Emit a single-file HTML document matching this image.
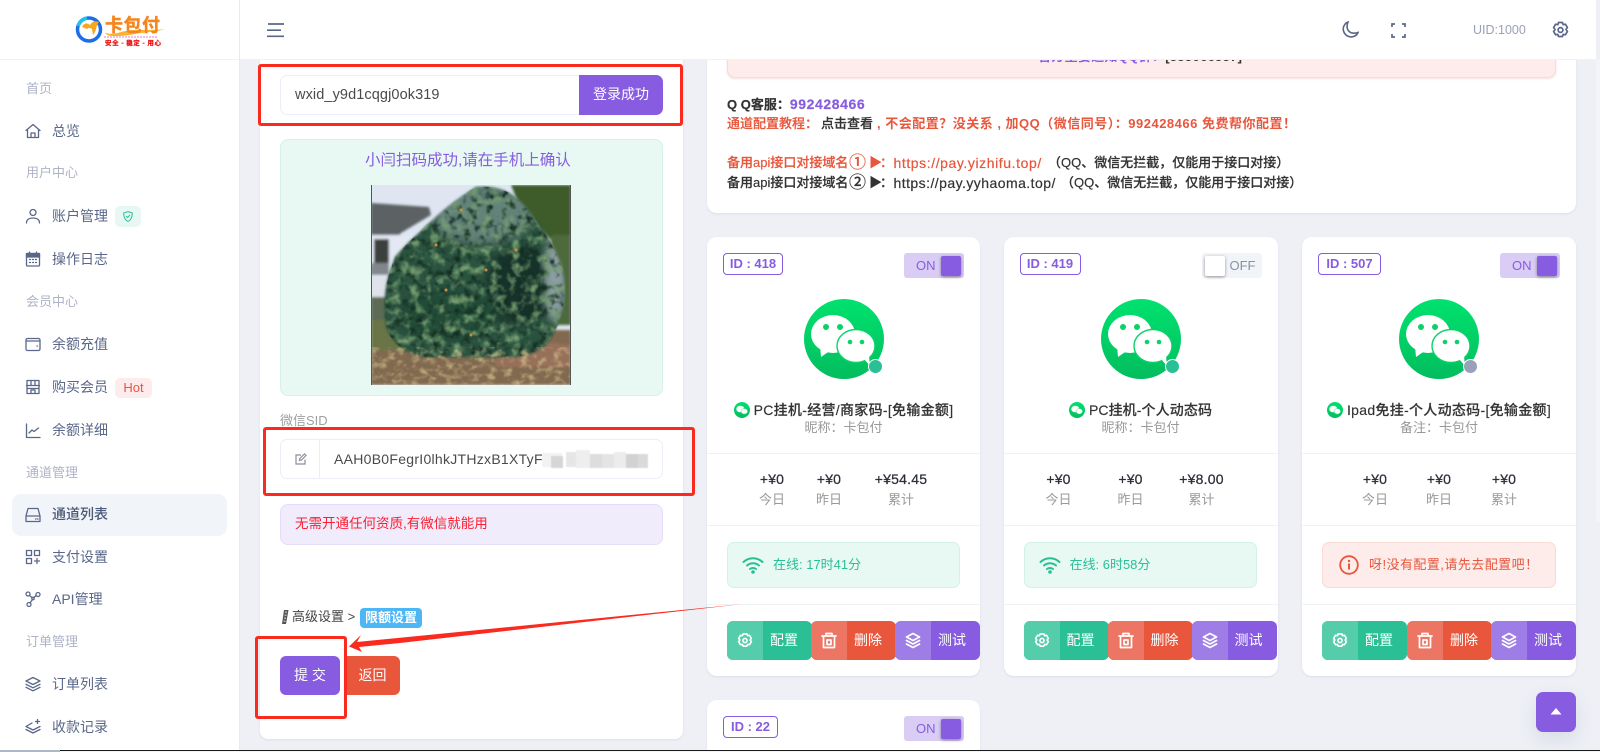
<!DOCTYPE html>
<html lang="zh"><head><meta charset="utf-8"><title>卡包付</title>
<style>
*{box-sizing:border-box;margin:0;padding:0}
html,body{width:1600px;height:752px;overflow:hidden;background:#eef0f6}
body{position:relative;font-family:"Liberation Sans","Noto Sans CJK SC",sans-serif;font-size:13px;color:#333}
.a,.t,.card,.card>*{position:absolute}
.t{white-space:nowrap;line-height:20px}
.side{left:0;top:0;width:240px;height:752px;background:#fff;border-right:1px solid #e8eaf0;z-index:5}
.head{left:240px;top:0;width:1356px;height:60px;background:#fff;border-bottom:1px solid #f1f2f6;z-index:4}
.sec{left:26px;color:#aeb3c6;font-size:13px}
.it{left:52px;color:#5a6788;font-size:14px}
.ic{position:absolute;left:25px;width:16px;height:16px;fill:none;stroke:#5a6788;stroke-width:1.3;stroke-linecap:round;stroke-linejoin:round}
.box{background:#fff;border-radius:8px;box-shadow:0 1px 2px rgba(60,70,110,.1)}
.rb{position:absolute;border:3px solid #fb2a1e;border-radius:3px;z-index:3}
.card{width:273px;height:439px;background:#fff;border-radius:10px;box-shadow:0 1px 2px rgba(60,70,110,.1)}
.id{left:16px;top:16px;height:22px;border:1px solid #875ce0;border-radius:4px;color:#875ce0;font-weight:bold;font-size:13px;line-height:20px;text-align:center;white-space:nowrap}
.tg{left:197px;top:16px;width:60px;height:25px;background:#d9cdf5;border-radius:3px;color:#875ce0;font-size:13px;line-height:25px}
.tg i{position:absolute;left:37px;top:3px;width:20px;height:20px;background:#875ce0;border-radius:2px;box-shadow:0 1px 3px rgba(0,0,0,.4)}
.tg span{position:absolute;left:12px}
.tg.off{background:#f1f4f8;color:#8a8fa3}
.tg.off i{left:3px;background:#fff}
.tg.off span{left:28px}
.we{left:97px;top:62px;width:80px;height:80px}
.dot{left:161px;top:122px;width:15px;height:15px;border-radius:50%;background:#2abf94;border:1.5px solid #fff}
.ti{left:0;width:273px;top:163px;text-align:center;font-size:14px;line-height:20px;font-weight:500;color:#333;white-space:nowrap;letter-spacing:.3px;-webkit-text-stroke:.15px #333}
.ti svg{width:16px;height:16px;vertical-align:-3px;margin-right:4px}
.su{left:0;width:273px;top:181px;text-align:center;color:#999;font-size:13px;line-height:20px}
.hr{left:0;width:273px;height:1px;background:#f1f2f6}
.v,.l{width:80px;text-align:center;line-height:20px}
.v{top:232px;font-size:14px;color:#2b2f3a;-webkit-text-stroke:.25px #2b2f3a;letter-spacing:.2px}
.l{top:253px;color:#999;font-size:13px}
.st{left:20px;top:305px;width:233px;height:46px;background:#e8f8f3;border:1px solid #d3f1e8;border-radius:7px;color:#2abf94;line-height:44px;font-size:13px;padding-left:45px;white-space:nowrap}
.st svg{position:absolute;left:14px;top:13px;width:22px;height:18px}
.st.e{background:#fdecea;border-color:#fbd9d5;color:#e8563c;padding-left:46px;letter-spacing:.45px}
.st.e svg{left:16px;top:12px;width:20px;height:20px}
.b{top:384px;width:85px;height:39px;border-radius:6px;overflow:hidden;color:#fff;font-size:14px;line-height:39px;text-align:right;padding-right:14px}
.b i{position:absolute;left:0;top:0;width:36px;height:39px}
.b svg{position:absolute;left:10px;top:11px;width:16px;height:17px;fill:none;stroke:#fff;stroke-width:1.7;stroke-linejoin:round;stroke-linecap:round}
.g{background:#2abf94}.g i{background:#55cdaa}
.r{background:#e8563c}.r i{background:#ec7663}
.p{background:#875ce0}.p i{background:#9f7de6}
.red{color:#e8563c}
.pu{color:#875ce0}
.bd{font-weight:bold}
.m{font-weight:500;-webkit-text-stroke:.2px currentColor}
.url{font-size:14px}
</style></head><body>
<svg width="0" height="0" style="position:absolute"><defs>
<linearGradient id="wg" x1="0" y1="0" x2="0" y2="1"><stop offset="0" stop-color="#00e26f"/><stop offset="1" stop-color="#03bd5e"/></linearGradient>
<symbol id="we" viewBox="0 0 80 80"><circle cx="40" cy="40" r="40" fill="url(#wg)"/>
<ellipse cx="29" cy="35" rx="22" ry="19" fill="#fff"/><path d="M16 47l1 11 10-7z" fill="#fff"/>
<circle cx="22" cy="28" r="3" fill="#0ad269"/><circle cx="36" cy="28" r="3" fill="#0ad269"/>
<ellipse cx="52" cy="47" rx="19" ry="16.5" fill="#fff" stroke="#0ad269" stroke-width="1.4"/><path d="M60 60l6 7-1-10z" fill="#fff"/>
<circle cx="46" cy="43" r="2.3" fill="#0ad269"/><circle cx="58" cy="43" r="2.3" fill="#0ad269"/></symbol>
<symbol id="wes" viewBox="0 0 16 16"><circle cx="8" cy="8" r="8" fill="url(#wg)"/><ellipse cx="6.3" cy="7" rx="4" ry="3.3" fill="#fff"/><ellipse cx="10.3" cy="9.3" rx="3.3" ry="2.8" fill="#fff" stroke="#0ad269" stroke-width=".4"/></symbol>
<symbol id="gear" viewBox="0 0 17 18"><path d="M6.500 2h4l.7 1.900 2.100-.4 2 3.400-1.400 1.600 1.400 1.600-2 3.400-2.100-.4-.7 1.900h-4l-.7-1.900-2.100.4-2-3.400 1.400-1.600-1.400-1.600 2-3.400 2.100.4z"/><circle cx="8.500" cy="9" r="2.200"/></symbol>
<symbol id="trash" viewBox="0 0 16 17"><path d="M1 4h14M5 4V1.500h6V4M2.500 4v11.500h11V4M6 8h4v4.500H6z"/></symbol>
<symbol id="lay" viewBox="0 0 16 17"><path d="M8 1.500l6.500 3.500L8 8.500 1.500 5zM1.500 8.500L8 12l6.500-3.500M1.500 12L8 15.500l6.500-3.500"/></symbol>
<symbol id="wifi" viewBox="0 0 22 18"><g fill="none" stroke="#2abf94" stroke-width="2" stroke-linecap="round"><path d="M1.500 6C7 1 15 1 20.500 6"/><path d="M5 9.500c3.500-3 8.500-3 12 0"/><path d="M8 13c1.800-1.300 4.200-1.300 6 0"/></g><circle cx="11" cy="16" r="1.800" fill="#2abf94"/></symbol>
<filter id="leaf" x="0" y="0" width="100%" height="100%" color-interpolation-filters="sRGB"><feTurbulence type="fractalNoise" baseFrequency=".1" numOctaves="3" seed="5"/><feColorMatrix values="0 0 0 0 .46 0 0 0 0 .62 0 0 0 0 .44 3 0 0 0 -1.400"/><feGaussianBlur stdDeviation=".6"/></filter>
<filter id="leaf2" x="0" y="0" width="100%" height="100%" color-interpolation-filters="sRGB"><feTurbulence type="fractalNoise" baseFrequency=".13" numOctaves="2" seed="21"/><feColorMatrix values="0 0 0 0 .08 0 0 0 0 .18 0 0 0 0 .13 3.500 0 0 0 -1.700"/><feGaussianBlur stdDeviation=".6"/></filter>
<filter id="dirt" x="0" y="0" width="100%" height="100%" color-interpolation-filters="sRGB"><feTurbulence type="fractalNoise" baseFrequency=".12 .18" numOctaves="3" seed="9"/><feColorMatrix values="0 0 0 0 .84 0 0 0 0 .76 0 0 0 0 .56 3 0 0 0 -1.400"/><feGaussianBlur stdDeviation=".5"/></filter>
<filter id="bl"><feGaussianBlur stdDeviation="1.200"/></filter>
<filter id="bl2"><feGaussianBlur stdDeviation="4"/></filter>
<clipPath id="tree"><path d="M24 72Q36 58 50 46 75 20 105 2q30-3 48 18 26 30 38 62 8 35-8 65-8 22-40 25H55q-30-4-40-30-4-25 2-50z"/></clipPath>
</defs></svg>

<!-- content -->
<div class="a box" style="left:260px;top:40px;width:423px;height:699px"></div>
<div class="a" style="left:280px;top:75px;width:383px;height:40px;background:#fff;border:1px solid #eceef6;border-radius:7px"></div>
<div class="a" style="left:579px;top:75px;width:84px;height:40px;background:#875ce0;border-radius:0 7px 7px 0;color:#fff;font-size:14px;line-height:39px;text-align:center">登录成功</div>
<div class="t" style="left:295px;top:85px;font-size:14.500px;color:#4a4a4a;letter-spacing:.1px">wxid_y9d1cqgj0ok319</div>
<div class="rb" style="left:258px;top:64px;width:425px;height:62px"></div>

<div class="a" style="left:280px;top:139px;width:383px;height:257px;background:#e8f8f3;border:1px solid #d6f1e9;border-radius:8px"></div>
<div class="t" style="left:365px;top:150.500px;font-size:15.500px;color:#875ce0">小闫扫码成功,请在手机上确认</div>
<svg class="a" style="left:371px;top:185px" width="200" height="200" viewBox="0 0 200 200">
<rect width="200" height="200" fill="#dfe6f2"/>
<g filter="url(#bl)">
<path d="M0 18 L58 22 L60 30 L30 48 L22 60 L0 62z" fill="#5c6264"/>
<rect x="0" y="50" width="60" height="60" fill="#e3e8f3"/>
<rect x="3" y="54" width="15" height="24" fill="#3a3f3c"/>
<rect x="0" y="78" width="18" height="12" fill="#80868a"/>
<rect x="0" y="92" width="16" height="22" fill="#dfe2ea"/>
<rect x="0" y="112" width="40" height="30" fill="#5d6a55"/>
<path d="M140 0H200V80L185 60 150 25z" fill="#3d5c2b"/>
<path d="M180 50h20v90h-20z" fill="#4d6a3c"/>
<rect x="0" y="145" width="200" height="55" fill="#80694f"/>
<path d="M0 135h50v30H0z" fill="#6a7446"/>
<path d="M125 150l75 10v22h-75z" fill="#97705a"/>
</g>
<g filter="url(#bl)"><g clip-path="url(#tree)">
<rect width="200" height="200" fill="#2c5240"/>
<ellipse cx="110" cy="30" rx="52" ry="28" fill="#64827a" filter="url(#bl2)"/>
<ellipse cx="150" cy="100" rx="34" ry="38" fill="#14302a" filter="url(#bl2)"/>
<ellipse cx="184" cy="95" rx="12" ry="42" fill="#8a9ea2" filter="url(#bl2)"/>
<ellipse cx="75" cy="130" rx="48" ry="28" fill="#234c37" filter="url(#bl2)"/>
</g></g>
<g clip-path="url(#tree)">
<rect width="200" height="200" filter="url(#leaf2)"/>
<rect width="200" height="200" filter="url(#leaf)"/>
</g>
<rect y="162" width="200" height="38" filter="url(#dirt)" opacity=".7"/>
<g fill="#d68a35"><circle cx="90" cy="25" r="1.500"/><circle cx="145" cy="65" r="1.500"/><circle cx="115" cy="85" r="1.500"/><circle cx="75" cy="105" r="1.500"/><circle cx="65" cy="60" r="1.500"/><circle cx="100" cy="150" r="1.500"/></g>
<rect x="0" width="1" height="200" fill="#555"/><rect x="199" width="1" height="200" fill="#555"/>
</svg>

<div class="t" style="left:280px;top:411px;color:#a0a0a0">微信SID</div>
<div class="a" style="left:280px;top:439px;width:383px;height:40px;background:#fff;border:1px solid #eceef6;border-radius:7px"></div>
<div class="a" style="left:319px;top:439px;width:1px;height:40px;background:#eceef6"></div>
<svg class="a" style="left:295px;top:453px" width="12" height="12" viewBox="0 0 12 12" fill="none" stroke="#8a8f9e" stroke-width="1.200"><path d="M10 6.500V11H1V2h5"/><path d="M4.500 7.500l.3-2L9.500 1l1.500 1.500L6.500 7z"/></svg>
<div class="t" style="left:334px;top:449px;font-size:14px;color:#4a4a4a;letter-spacing:.28px;width:210px;overflow:hidden">AAH0B0FegrI0lhkJTHzxB1XTyF</div>
<svg class="a" style="left:542px;top:447px" width="112" height="24"><rect width="112" height="24" fill="#fff"/><g fill="#e6e6e6" style="filter:blur(.5px)"><rect x="0" y="6" width="20" height="14" fill="#f2f2f2"/><rect x="9" y="9" width="12" height="12" fill="#d6d6d6"/><rect x="24" y="5" width="10" height="15"/><rect x="34" y="3" width="14" height="18" fill="#eeeeee"/><rect x="48" y="7" width="12" height="14" fill="#dddddd"/><rect x="60" y="7" width="12" height="14" fill="#e4e4e4"/><rect x="72" y="5" width="12" height="16" fill="#ececec"/><rect x="84" y="7" width="12" height="14" fill="#d2d2d2"/><rect x="96" y="7" width="10" height="14" fill="#dadada"/></g></svg>
<div class="rb" style="left:263px;top:427px;width:432px;height:69px"></div>

<div class="a" style="left:280px;top:504px;width:383px;height:41px;background:#f1ecfb;border:1px solid #e5dcf7;border-radius:8px"></div>
<div class="t" style="left:295px;top:514px;font-size:13.500px;color:#fb1f33">无需开通任何资质,有微信就能用</div>

<svg class="a" style="left:281px;top:609px" width="9" height="16" viewBox="0 0 9 16"><path d="M3 1h4.500L5 15H1z" fill="#555"/><path d="M4 3l2 .3M3.500 6l2 .3M3 9l2 .3M2.500 12l2 .3" stroke="#ddd"/></svg>
<div class="t" style="left:292px;top:607px;color:#444;font-size:13px">高级设置 &gt;</div>
<div class="a" style="left:360px;top:608px;width:62px;height:20px;background:#4db6f5;border-radius:4px;color:#fff;text-align:center;line-height:20px;font-size:13px;font-weight:bold">限额设置</div>
<div class="a" style="left:280px;top:656px;width:60px;height:39px;background:#875ce0;border-radius:6px;color:#fff;text-align:center;line-height:39px;font-size:14px">提 交</div>
<div class="a" style="left:345px;top:656px;width:55px;height:39px;background:#e8563c;border-radius:0 6px 6px 0;color:#fff;text-align:center;line-height:39px;font-size:14px">返回</div>
<div class="rb" style="left:255px;top:636px;width:92px;height:83px"></div>

<div class="a box" style="left:707px;top:30px;width:869px;height:183px;border-radius:10px"></div>
<div class="a" style="left:727px;top:30px;width:829px;height:48px;background:#fdecea;border:1px solid #fbd9d5;border-radius:8px;box-shadow:0 1px 2px rgba(200,100,90,.2)"></div>
<div class="t bd" style="left:1038px;top:47px;color:#875ce0;letter-spacing:.3px">官方重要通知QQ群：<span style="color:#333">[555066557]</span></div>
<div class="t m" style="left:727px;top:94px;color:#333;font-weight:bold">Q Q客服：<span class="pu bd" style="font-size:14px;letter-spacing:.6px">992428466</span></div>

<div class="t m red" style="left:727px;top:114px">通道配置教程：</div>
<div class="t m" style="left:821px;top:114px;color:#333">点击查看</div>
<div class="t bd red" style="left:877px;top:114px;letter-spacing:.5px">, 不会配置？没关系 , 加QQ（微信同号）：992428466 免费帮你配置！</div>

<div class="t m red" style="left:727px;top:153px">备用api接口对接域名</div>
<div class="t m red" style="left:849px;top:153px;font-size:17px">①</div>
<div class="t m red" style="left:869px;top:153px">▶</div>
<div class="t m red" style="left:880px;top:153px">：</div>
<div class="t m red url" style="left:893.500px;top:153px;letter-spacing:.58px">https://pay.yizhifu.top/</div>
<div class="t m" style="left:1048px;top:153px;color:#333">（QQ、微信无拦截，仅能用于接口对接）</div>

<div class="t m" style="left:727px;top:173px;color:#333">备用api接口对接域名</div>
<div class="t m" style="left:849px;top:173px;font-size:17px;color:#333">②</div>
<div class="t m" style="left:869px;top:173px;color:#333">▶</div>
<div class="t m" style="left:880px;top:173px;color:#333">：</div>
<div class="t m url" style="left:893.500px;top:173px;letter-spacing:.45px;color:#333">https://pay.yyhaoma.top/</div>
<div class="t m" style="left:1061px;top:173px;color:#333">（QQ、微信无拦截，仅能用于接口对接）</div>

<!-- card 1 -->
<div class="card" style="left:707px;top:237px">
<div class="id" style="width:60px">ID : 418</div>
<div class="tg"><span>ON</span><i></i></div>
<svg class="we"><use href="#we"/></svg><div class="dot"></div>
<div class="ti"><svg><use href="#wes"/></svg>PC挂机-经营/商家码-[免输金额]</div>
<div class="su">昵称：卡包付</div>
<div class="hr" style="top:216px"></div>
<div class="v" style="left:25px">+¥0</div><div class="l" style="left:25px">今日</div>
<div class="v" style="left:82px">+¥0</div><div class="l" style="left:82px">昨日</div>
<div class="v" style="left:154px">+¥54.45</div><div class="l" style="left:154px">累计</div>
<div class="hr" style="top:288px"></div>
<div class="st"><svg><use href="#wifi"/></svg>在线: 17时41分</div>
<div class="hr" style="top:367px"></div>
<div class="b g" style="left:20px"><i><svg><use href="#gear"/></svg></i>配置</div>
<div class="b r" style="left:104px"><i><svg><use href="#trash"/></svg></i>删除</div>
<div class="b p" style="left:188px"><i><svg><use href="#lay"/></svg></i>测试</div>
</div>
<!-- card 2 -->
<div class="card" style="left:1003.500px;top:237px;width:274px">
<div class="id" style="width:61px">ID : 419</div>
<div class="tg off" style="left:198px"><i></i><span>OFF</span></div>
<svg class="we"><use href="#we"/></svg><div class="dot"></div>
<div class="ti" style="letter-spacing:.1px;width:274px"><svg><use href="#wes"/></svg>PC挂机-个人动态码</div>
<div class="su" style="width:274px">昵称：卡包付</div>
<div class="hr" style="top:216px;width:274px"></div>
<div class="v" style="left:15px">+¥0</div><div class="l" style="left:15px">今日</div>
<div class="v" style="left:87px">+¥0</div><div class="l" style="left:87px">昨日</div>
<div class="v" style="left:158px">+¥8.00</div><div class="l" style="left:158px">累计</div>
<div class="hr" style="top:288px;width:274px"></div>
<div class="st"><svg><use href="#wifi"/></svg>在线: 6时58分</div>
<div class="hr" style="top:367px;width:274px"></div>
<div class="b g" style="left:20px"><i><svg><use href="#gear"/></svg></i>配置</div>
<div class="b r" style="left:104px"><i><svg><use href="#trash"/></svg></i>删除</div>
<div class="b p" style="left:188px"><i><svg><use href="#lay"/></svg></i>测试</div>
</div>
<!-- card 3 -->
<div class="card" style="left:1302px;top:237px;width:274px">
<div class="id" style="width:63px">ID : 507</div>
<div class="tg" style="left:198px"><span>ON</span><i></i></div>
<svg class="we"><use href="#we"/></svg><div class="dot" style="background:#9aa0b8"></div>
<div class="ti" style="width:274px"><svg><use href="#wes"/></svg>Ipad免挂-个人动态码-[免输金额]</div>
<div class="su" style="width:274px">备注：卡包付</div>
<div class="hr" style="top:216px;width:274px"></div>
<div class="v" style="left:33px">+¥0</div><div class="l" style="left:33px">今日</div>
<div class="v" style="left:97px">+¥0</div><div class="l" style="left:97px">昨日</div>
<div class="v" style="left:162px">+¥0</div><div class="l" style="left:162px">累计</div>
<div class="hr" style="top:288px;width:274px"></div>
<div class="st e" style="width:234px"><svg viewBox="0 0 20 20"><circle cx="10" cy="10" r="8.800" fill="none" stroke="#e8563c" stroke-width="1.800"/><rect x="9" y="8.500" width="2" height="6" fill="#e8563c"/><circle cx="10" cy="6" r="1.200" fill="#e8563c"/></svg>呀!没有配置,请先去配置吧！</div>
<div class="hr" style="top:367px;width:274px"></div>
<div class="b g" style="left:20px"><i><svg><use href="#gear"/></svg></i>配置</div>
<div class="b r" style="left:105px"><i><svg><use href="#trash"/></svg></i>删除</div>
<div class="b p" style="left:189px"><i><svg><use href="#lay"/></svg></i>测试</div>
</div>
<!-- card 4 -->
<div class="card" style="left:707px;top:700px;height:52px;border-radius:10px 10px 0 0">
<div class="id" style="width:55px">ID : 22</div>
<div class="tg"><span>ON</span><i></i></div>
</div>

<svg class="a" style="left:340px;top:600px;z-index:3" width="410" height="60"><polygon points="403,4 17,42 21,35 9,46.500 22,52 19,47 60,43" fill="#fb2a1e"/></svg>

<div class="a" style="left:1536px;top:692px;width:40px;height:40px;background:#875ce0;border-radius:7px;box-shadow:0 8px 20px rgba(60,70,110,.12)"><svg class="a" style="left:14px;top:16px" width="12" height="7"><path d="M6 0l5.500 6.500H.5z" fill="#fff"/></svg></div>
<div class="a" style="left:1596px;top:60px;width:4px;height:462px;background:#f3f4f8"></div>

<!-- header -->
<div class="a head">
<svg class="a" style="left:27px;top:22px" width="18" height="16"><path d="M1 2h16M0 8.200h14M0 14.300h17" stroke="#5a6788" stroke-width="1.700" fill="none"/></svg>
<svg class="a" style="left:1102px;top:21px" width="17" height="17" viewBox="0 0 17 17" fill="none" stroke="#5a6788" stroke-width="1.600"><path d="M6 1C3 9 8 14 16 11.500 14.500 15 11 16.300 8 15.800 3.500 15 .8 11 1.300 7 1.600 4.500 3.500 2 6 1z"/></svg>
<svg class="a" style="left:1151px;top:23px" width="15" height="15" viewBox="0 0 15 15" fill="none" stroke="#5a6788" stroke-width="1.700"><path d="M1 4V1h3M11 1h3v3M14 11v3h-3M4 14H1v-3"/></svg>
<div class="t" style="left:1233px;top:20px;color:#9a9fb5;font-size:12.500px">UID:1000</div>
<svg class="a" style="left:1312px;top:21px" width="17" height="18" viewBox="0 0 17 18" fill="none" stroke="#5a6788" stroke-width="1.700" stroke-linejoin="round"><path d="M6.500 1.500h4l.7 2.200 2.200-.5 2 3.400-1.500 1.900 1.500 1.900-2 3.400-2.200-.5-.7 2.200h-4l-.7-2.200-2.200.5-2-3.400 1.500-1.900-1.500-1.900 2-3.400 2.200.5z"/><circle cx="8.500" cy="9" r="2.400"/></svg>
</div>

<!-- sidebar -->
<div class="a side">
<div class="a" style="left:0;top:59px;width:239px;height:1px;background:#f1f2f6"></div>
<svg class="a" style="left:74px;top:12px" width="94" height="36" viewBox="0 0 94 36">
<circle cx="15" cy="17.500" r="11.500" fill="#fff" stroke="#1c6ee8" stroke-width="3.500"/>
<path d="M4 14a11.500 11.500 0 0 1 9-8" stroke="#1cc2f0" stroke-width="3.500" fill="none"/>
<path d="M8 15q3-6 8-2 3-5 9-3-2 2-3 7-1 4-3 6l-1-6q-3-2-5 0z" fill="#f8a81f"/>
<path d="M31 21q8 2 16-1 12-3 18-2 8 0 26-.5-16 3-28 4-12 3-24 2.500-6 0-8-3z" fill="#f9b331"/>
<text x="31" y="19.500" font-size="18" font-weight="bold" fill="#f5851f" stroke="#f5851f" stroke-width=".4" font-family="Noto Sans CJK SC,sans-serif" textLength="55">卡包付</text>
<path d="M30 25h54" stroke="#d94fd0" stroke-width=".8" stroke-dasharray="2 1"/>
<text x="31" y="33" font-size="6.500" font-weight="bold" fill="#ee1111" stroke="#ee1111" stroke-width=".2" font-family="Noto Sans CJK SC,sans-serif" textLength="56">安全 - 稳定 - 用心</text>
</svg>

<div class="t sec" style="top:79px">首页</div>
<svg class="ic" style="top:123px" viewBox="0 0 16 16"><path d="M1 7.500L8 1.500l7 6M2.500 6.500V14.500h11V6.500M6 14.500V10h4v4.500"/></svg>
<div class="t it" style="top:121px">总览</div>
<div class="t sec" style="top:163px">用户中心</div>
<svg class="ic" style="top:208px" viewBox="0 0 16 16"><circle cx="8" cy="4.500" r="3"/><path d="M1.500 15c0-3.500 2.800-5 6.500-5s6.500 1.500 6.500 5"/></svg>
<div class="t it" style="top:206px">账户管理</div>
<div class="a" style="left:115px;top:206px;width:26px;height:21px;background:#e7f7f3;border-radius:5px"><svg class="a" style="left:8px;top:5px" width="10" height="11" viewBox="0 0 10 11" fill="none" stroke="#2abf94" stroke-width="1"><path d="M5 .6l4.300 1.400c0 4-1 7-4.300 8.400C1.700 9 .7 6 .7 2z"/><path d="M3 5l1.500 1.500L7 4"/></svg></div>
<svg class="ic" style="top:251px" viewBox="0 0 16 16"><rect x="1.500" y="2.500" width="13" height="12.500" rx="1"/><path d="M1.500 2.500h13V6h-13z" fill="#5a6788"/><path d="M4.500 1v2M11.500 1v2M4.500 8.500h1M7.500 8.500h1M10.500 8.500h1M4.500 11.500h1M7.500 11.500h1M10.500 11.500h1"/></svg>
<div class="t it" style="top:249px">操作日志</div>
<div class="t sec" style="top:292px">会员中心</div>
<svg class="ic" style="top:336px" viewBox="0 0 16 16"><rect x="1" y="2.500" width="14" height="12" rx="1.500"/><path d="M1 5h14M12 10h.5"/></svg>
<div class="t it" style="top:334px">余额充值</div>
<svg class="ic" style="top:379px" viewBox="0 0 16 16"><path d="M2 1.500h12v13H2zM1.500 6.500h13M6 1.500v5M10 1.500v5M2 9.500h12M6 11h4v3.500H6z"/></svg>
<div class="t it" style="top:377px">购买会员</div>
<div class="a" style="left:115px;top:378px;width:37px;height:20px;background:#fdeceb;border-radius:5px;color:#e9534a;font-size:13px;line-height:20px;text-align:center">Hot</div>
<svg class="ic" style="top:423px" viewBox="0 0 16 16"><path d="M1.500 1v13.500h13.500M4 10l3-3 2 1.500 4.500-3.500"/></svg>
<div class="t it" style="top:420px">余额详细</div>
<div class="t sec" style="top:463px">通道管理</div>
<div class="a" style="left:12px;top:494px;width:215px;height:42px;background:#f1f4f9;border-radius:9px"></div>
<svg class="ic" style="top:507px" viewBox="0 0 16 16"><path d="M1 9l2-7.500h10L15 9v5.500H1zM1 9h14M10.500 12h.5M12.500 12h.5"/></svg>
<div class="t it" style="top:504px;font-weight:500;color:#4b5877">通道列表</div>
<svg class="ic" style="top:549px" viewBox="0 0 16 16"><path d="M1.500 1.500h5v5h-5zM9.500 1.500h5v5h-5zM1.500 9.500h5v5h-5zM9.500 12h5M12 9.500v5"/></svg>
<div class="t it" style="top:547px">支付设置</div>
<svg class="ic" style="top:591px" viewBox="0 0 16 16"><circle cx="3" cy="3" r="2"/><circle cx="13" cy="3.500" r="2"/><circle cx="4" cy="13.500" r="2"/><circle cx="8" cy="7.500" r="1.200"/><path d="M4.500 4.500l2.500 2M11 4.500L9 6.500M7.500 8.500L5 12"/></svg>
<div class="t it" style="top:589px">API管理</div>
<div class="t sec" style="top:632px">订单管理</div>
<svg class="ic" style="top:676px" viewBox="0 0 16 16"><path d="M8 1.500l7 3.500-7 3.500L1 5zM1 8.300l7 3.500 7-3.500M1 11.300l7 3.500 7-3.500"/></svg>
<div class="t it" style="top:674px">订单列表</div>
<svg class="ic" style="top:719px" viewBox="0 0 16 16"><path d="M7 4L1 7.500l7 3.500 7-3.500M1 10.500L8 14l7-3.500M12.500.5v4M10.500 2.500h4"/></svg>
<div class="t it" style="top:717px">收款记录</div>
</div>

<div class="a" style="left:0;top:750px;width:1600px;height:1px;background:#1a1a1a;z-index:9"></div>
<div class="a" style="left:0;top:750px;width:60px;height:2px;background:#aeb8c8;z-index:9"></div>
<div class="a" style="left:60px;top:751px;width:1540px;height:1px;background:#f4f4f6;z-index:9"></div>
</body></html>
